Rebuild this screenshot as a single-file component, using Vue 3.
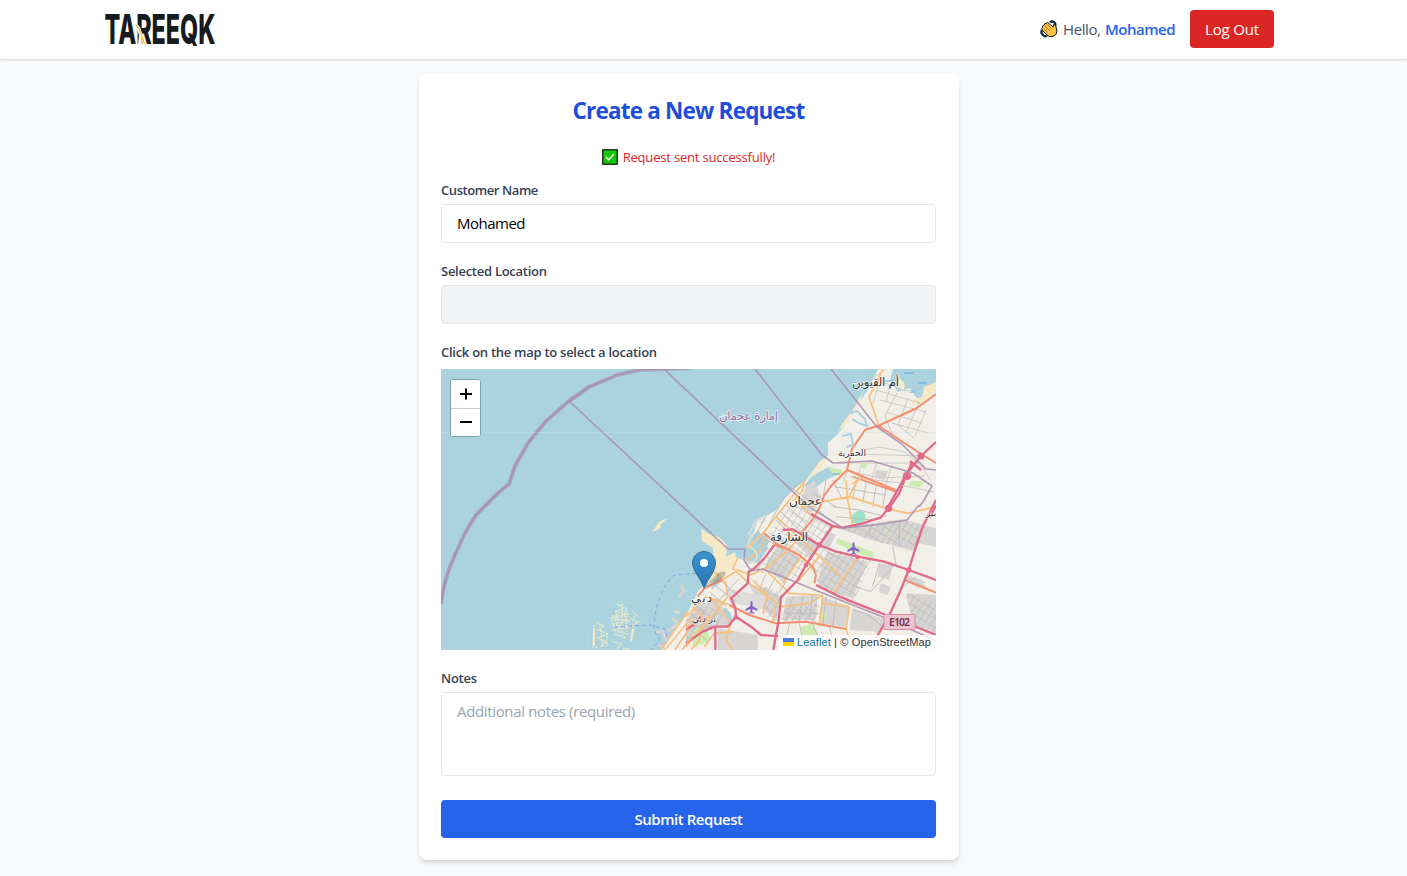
<script setup>
import { ref } from 'vue'

const customer = ref('Mohamed')
const location = ref('')
const notes = ref('')

// Northern road network, in map canvas units
const northMinor = [
  'M848 470L842 484M861 465L856 484M877 462L870 484M892 465L886 484M905 471L900 484M836 463L920 463L930 480M853 454L925 456M900 485L934 492M850 477L900 483M862 450L880 447L905 452L925 470M846 470L880 478L925 476',
  'M872 378L906 391L922 388M876 390L920 403M880 400L926 412M886 412L922 423M892 423L928 433M897 393L885 416L894 439M908 398L898 425L914 438M919 402L906 433M926 410L915 436M891 383L886 402M881 372L873 404M868 381L885 370'
]
const northOrange = 'M883 369L869 397L878 423L879 429M858 480L847 500M864 476L852 484'
const northCoral = 'M936 394L917 408L880 425L865 430L852 449L847 470L830 487M879 426L921 454L936 463M847 470L898 491'
const northPink = 'M936 442L921 456L908 472L901 484L888 507M908 472L912 462M936 505L930 518M910 461L921 470'

// City road network, on a canvas three times finer than the map
const cityPink = 'M655 0L640 40L610 82L585 112L530 130L470 143L440 138L375 102M440 138L400 195L360 255L335 300L285 352L278 420L262 510M290 150L320 148L350 165L400 195L450 215L515 230L595 245L668 270L750 300M750 60L710 140L690 200L668 270L640 340L610 405L585 450L570 475M265 195L235 235L205 265L188 275L185 310L135 355L148 385L150 410L195 440L225 465L300 470M0 490L50 455L85 440L125 440L150 410M390 315L460 350L535 380L600 405L750 465M88 440V510M0 450L30 430L45 410'
const cityCoral = 'M450 0L415 45L400 85L375 125L345 160M265 195L300 205L340 225L380 260L390 285L385 310M130 375L190 405L270 430L360 425L480 447M35 350L55 325L110 300M655 300L750 338M500 -10L630 35M235 160L270 190L300 205'
const cityOrange = 'M110 300L155 270L195 285L235 265L310 340L400 345M85 275L120 310L125 350L60 430L0 500M155 235L140 265L190 310L260 360L290 380L370 370L410 345M185 205L235 155L270 110L310 60L355 5L350 30L325 60L360 80L410 65L490 50L600 85L665 100L750 80M270 110L330 165L400 230L465 290M325 60L375 105M480 0L485 60L500 135M515 230L440 345M410 345L400 440M345 230L290 310M490 380L480 447L500 500M410 370L490 380M400 230L330 310M350 165L300 215L235 270M240 165L225 210L185 240M200 300L245 345L230 400M270 375L260 430M0 410L60 350L105 365L130 375M75 355L135 430L120 480L140 510M20 380L50 410L40 480L15 510M0 440L75 410M55 500L85 460L140 455'
const cityStreets = 'M200 180L240 110L225 130M215 195L290 60L345 5M300 75L370 140M285 95L350 160M270 120L330 180M310 20L370 60M340 70L400 130M365 60L430 120M380 40L450 80M420 0L410 60M440 0L470 60M445 20L600 45M440 80L520 90L600 110M450 110L560 120M510 0L500 60M540 10L530 70M570 20L560 80M600 25L590 80M640 120L640 190M560 130L545 170M620 200L630 250L555 335L510 320M580 250L560 320M690 290L640 330M655 300L720 320M90 290L160 350M80 310L150 365M70 335L120 380M130 330L90 370M160 295L110 350M10 400L80 450M25 370L95 430M20 440L60 480M60 390L20 430M90 400L50 450M320 350L300 420M350 350L340 420M380 345L370 420M300 400L400 400M420 350L410 440M450 360L440 440M500 390L540 400L590 440L570 460M240 280L220 330M270 290L245 335M300 305L270 350M310 430L300 480M340 430L350 480M380 430L400 480M430 440L440 480'
const blocks = [
  'M240 165L330 60L440 140L400 195L335 300L190 270L235 235Z',
  'M400 195L560 240L500 370L395 322L390 285L360 255Z',
  'M190 290L285 340L275 430L225 400L245 345Z',
  'M470 143L650 118L720 140L690 205L560 185Z',
  'M300 385L400 370L390 430L280 425Z',
  'M30 380L130 385L90 440L0 490V430Z',
  'M660 340L750 365V460L690 440Z'
]
const plane = 'M0-6Q1-6 1-4V-1L6 2V4L1 2V5L3 6V7L0 6L-3 7V6L-1 5V2L-6 4V2L-1-1V-4Q-1-6 0-6Z'
const coast = 'M878 369L869 388L859 403L854 412L846 423L839 433L828 443L828 455L819 468L811 477L799 485L789 493L776 510L768 515L758 518L753 535L746 548L744 560L728 555L726 572L706 582L699 590L693 602L686 615L661 650H936V369Z'
const border = 'M441 604Q444 579 454 557L465 533L476 515L486 505L498 493L509 484L515 466L528 443L546 421L569 401L589 387L617 375L639 370L690 368'
</script>

<template>
  <div class="page">
    <header class="bar">
      <svg class="logo" width="112" height="36" viewBox="0 0 112 36" role="img">
        <text x="0.5" y="33" textLength="111" lengthAdjust="spacingAndGlyphs">TAREEQK</text>
        <path d="M30 10L36 16L42 33.5H34L35 24Z" fill="#fff" />
        <path d="M31 12L36 18L41 33H37.5L36 23Z" fill="#f4b51e" />
        <path d="M34 17L39.5 33" stroke="#fff" stroke-width=".8" />
      </svg>
      <div class="account">
        <svg class="wave" width="18" height="18" viewBox="0 0 18 18">
          <path d="M10 2.5Q12 .5 14.5 2.5Q16 4 15 6M2 10Q.5 13 3 15Q5 17 7 16" fill="none" stroke="#15323a" stroke-width="2.4" />
          <path d="M2.5 7.5Q2 5.5 4 5.5Q4 3 6 3.5Q7 1.5 9 3.5L13 7L13.5 4.5Q16 4 16 7L17 11Q17 15 13 16.5Q9 17.5 7 15L2.5 10.5Q1 8.5 2.5 7.5Z" fill="#fdc040" stroke="#171717" stroke-width="1" />
          <path d="M5 6L9.5 10.5M7.5 4.5L11.5 8.5M4 9L7.5 12.5" stroke="#9b6a1d" stroke-width=".7" />
        </svg>
        <span class="hello">Hello,</span>
        <span class="user">Mohamed</span>
        <button class="logout">Log Out</button>
      </div>
    </header>

    <form class="card" @submit.prevent>
      <h1>Create a New Request</h1>
      <p class="message">
        <svg width="16" height="16" viewBox="0 0 16 16">
          <rect x=".75" y=".75" width="14.5" height="14.5" fill="#16c60c" stroke="#111" stroke-width="1.2" />
          <path d="M4 8L6.7 10.7L12 5" fill="none" stroke="#fff" stroke-width="1.3" />
        </svg>
        <span>Request sent successfully!</span>
      </p>

      <label class="l-name"><span>Customer Name</span></label>
      <input v-model="customer" type="text" />
      <label class="l-loc"><span>Selected Location</span></label>
      <input v-model="location" class="locked" type="text" readonly />
      <label class="l-map"><span>Click on the map to select a location</span></label>

      <div class="map">
        <svg class="tiles" width="495" height="281" viewBox="441 369 495 281">
          <defs>
            <clipPath id="land"><path :d="coast" /></clipPath>
            <pattern id="streets" width="17" height="22" patternUnits="userSpaceOnUse" patternTransform="rotate(32)">
              <path d="M0 1H17M1 0V22" stroke="#b9b8b8" stroke-width="2" />
            </pattern>
            <linearGradient id="pin" x2="0" y2="1">
              <stop stop-color="#3b91cf" /><stop offset="1" stop-color="#2877b5" />
            </linearGradient>
          </defs>
          <rect x="441" y="369" width="495" height="281" fill="#aad3df" />
          <path :d="coast" fill="#f2efe9" />
          <g fill="#aad3df">
            <path d="M893 369H936V391L917 399L910 388L898 392L890 380ZM811 477L828 467L839 474L826 480L815 488L819 500L810 496L805 485ZM753 536L758 530L762 536L768 548L759 562L747 564L743 553ZM765 533L769 541L766 549L761 540Z" />
            <path d="M724 608L730 612L734 622L727 620L721 613ZM722 650L733 638L742 640L748 650ZM716 574L721 582L711 590Z" />
          </g>
          <g fill="#f5e9c6">
            <path d="M701 529L711 535L719 537L727 545L726 557L735 552L737 560L728 573L709 583L704 579L714 563L713 548L702 541ZM652 532L660 521L668 518L661 524L660 529ZM897 375L905 384L904 391L897 387ZM911 400L922 397L924 387L936 382V390L922 405L912 404Z" />
            <path d="M864 390L854 408L842 424L838 432L849 420L860 402ZM820 461L828 456L820 470L804 483Z" />
            <path d="M828 467L843 470L841 475L835 476Z" fill="#cdebb0" />
          </g>

          <g transform="translate(686 480) scale(.33333)">
            <g fill="#d6d5d3">
              <path d="M245 240L290 180L340 235L295 310L238 262ZM330 190L360 155L400 195L375 235ZM405 260L425 215L545 245L500 355L395 322ZM450 145L650 118L750 145V200L700 190L690 215L540 175L500 160ZM420 150L450 165L430 205L405 195ZM300 350L395 345L390 420L290 420ZM410 350L490 380L480 440L405 430ZM500 385L600 420L580 455L490 450ZM660 340L750 345V465L680 440ZM665 285L720 305L700 325L655 300ZM185 310L245 325L285 350L270 425L230 385ZM95 445L215 465V510H95ZM340 70L360 20L385 0L405 55L375 100Z" />
              <path d="M580 250L620 255L610 300L575 290ZM585 310L615 320L605 345L578 335ZM30 380L100 355L135 440L80 445L0 490V420Z" />
              <path d="M120 325L240 350L235 390L130 365Z" fill="#dedddb" />
            </g>
            <g fill="#cdebb0"><path d="M455 175L560 215L565 235L510 220L450 190ZM345 440L380 430L400 470H345ZM20 450L60 440L75 480L20 505ZM405 400H422V418H405ZM430 255L445 260L435 272Z" /><circle cx="603" cy="159" r="5" /><circle cx="662" cy="175" r="5" /></g>
            <path d="M498 105L515 92L535 95L540 120L520 132L500 128Z" fill="#9ce3c9" />
            <g fill="none" stroke-linejoin="round">
              <path v-for="d in blocks" :key="d" :d="d" fill="url(#streets)" />
              <path :d="cityStreets" stroke="#bab8b8" stroke-width="2.6" />
              <path :d="cityOrange" stroke="#f9c07c" stroke-width="5" />
              <path :d="cityCoral" stroke="#f5906f" stroke-width="6" />
              <path :d="cityPink" stroke="#e26a89" stroke-width="7" />
            </g>
            <g fill="#e26a89"><circle cx="400" cy="195" r="8" /><circle cx="360" cy="255" r="7" /><circle cx="515" cy="231" r="7" /><circle cx="668" cy="270" r="8" /><circle cx="608" cy="85" r="11" /><circle cx="150" cy="412" r="7" /></g>
            <path d="M200 160Q175 200 200 205Q220 225 210 240Q190 260 170 230" fill="none" stroke="#e8ddc5" stroke-width="5" />
            <path d="M188 165L210 120L240 112" fill="none" stroke="#ded9d4" stroke-width="6" />
          </g>

          <g clip-path="url(#land)" fill="none" stroke-linejoin="round">
            <path v-for="d in northMinor" :key="d" :d="d" stroke="#c3c1bf" stroke-width=".8" />
            <path :d="northOrange" stroke="#f9c07c" stroke-width="1.7" />
            <path :d="northCoral" stroke="#f5906f" stroke-width="2" />
            <path :d="northPink" stroke="#e26a89" stroke-width="2.3" />
          </g>
          <g fill="#e26a89"><circle cx="921" cy="456" r="3.5" /><circle cx="907" cy="476" r="4" /></g>
          <g fill="#cdebb0"><path d="M912 481L925 481L919 488L908 485ZM862 462L868 464L865 469L860 467Z" /></g>
          <path d="M876 470L888 471L885 480L875 478Z" fill="#d3d2cf" />

          <g fill="none" stroke="#a88cae" stroke-linejoin="round">
            <path :d="border" stroke-width="4" opacity=".65" />
            <path :d="border" stroke-width="1.2" />
            <path d="M569 401L728 549H745L744 560L751 571L763 569L830 596L888 619L936 641M664 369L808 506L843 528L875 525L907 520L919 505M755 369L822 455L833 463L872 461L913 473L932 486L923 502L919 507M831 369L877 427L902 444L926 469L936 470" stroke-width="1.6" opacity=".85" />
          </g>
          <g fill="none" stroke="#e6e6cc" stroke-width="1.5" stroke-dasharray="2 1">
            <path d="M617 604L624 608L615 612L629 614L610 618L630 621L611 624L629 627L612 630L628 634M622 604V635M616 610L619 633M626 607L627 632M612 616L626 616M611 621L628 619M613 626H629M615 634L626 638" />
            <path d="M632 611L637 615L631 619L639 622L632 625L634 630L631 641M596 622L604 626L598 630L608 634L597 638L606 642L600 647M594 625L593 647L597 648M600 624L603 648M607 633V646M612 641L621 644L617 650M623 649H630" />
          </g>
          <path d="M594 628V646M633 629L631 640" stroke="#f5e9c6" stroke-width="2" />
          <path d="M588 650Q587 622 602 609Q620 596 638 606Q648 616 640 638M673 595Q670 603 682 610" fill="none" stroke="#b5d8d7" />
          <path d="M614 627L650 625L665 629L668 641M650 651L660 640L654 630Q655 593 674 575L701 573M697 574L707 586" fill="none" stroke="#87a5e3" stroke-width="1" stroke-dasharray="4 3" />
          <path d="M681 585L684 591L679 597M674 611L680 613M656 632L663 632L665 641M672 618L678 624L668 631M658 644L665 649" fill="none" stroke="#d9d4d1" stroke-width="3" />
          <path d="M675 650L689 629M682 650L693 636" stroke="#f3b572" stroke-width="1.5" />
          <path d="M661 650L688 611M665 650L692 617" stroke="#f9c07c" stroke-width="1.5" />
          <path d="M850 413L857 411L865 419L867 426L859 423L852 419M842 436L851 434L853 445L846 447" fill="none" stroke="#aad3df" stroke-width="2" />
          <path d="M441 432.5H936" stroke="#c8e4e9" stroke-width=".6" opacity=".5" />
          <g stroke="#59aee8" stroke-width="1"><path d="M884 381H893M904 373H914M918 383H927M910 392H915M833 474H840" /></g>

          <g class="place">
            <text x="852" y="386" textLength="47">أم القيوين</text>
            <text x="838" y="456" textLength="28" class="small">الحمرية</text>
            <text x="789" y="505" textLength="33">عجمان</text>
            <text x="770" y="541" textLength="38">الشارقة</text>
            <text x="691" y="602" textLength="21">دبي</text>
            <text x="692" y="622" textLength="24" class="small">بر دبي</text>
            <text x="926" y="516" class="small">بير</text>
            <text x="719" y="420" textLength="59" class="region">إمارة عجمان</text>
          </g>
          <g fill="#8461c4">
            <path :d="plane" transform="translate(751.5 607)" /><path :d="plane" transform="translate(853.5 548)" />
          </g>
          <rect x="884" y="614.5" width="31" height="15" rx="1" fill="#edc4d1" stroke="#d58fa2" />
          <text x="889" y="626" class="route" textLength="21">E102</text>

          <path d="M704 587L718 573Q728 569 725 576Q720 583 704 587Z" fill="#333" opacity=".25" />
          <path d="M704 588Q702 582 696 573Q692.500 567 692.500 563A11.500 11.500 0 0 1 715.500 563Q715.500 568 712 574Q706 583 704 588Z" fill="url(#pin)" stroke="#2e6c97" />
          <circle cx="704" cy="563" r="4" fill="#fff" />
        </svg>
        <div class="zoom">
          <button type="button"><svg width="12" height="12"><path d="M6 0.500V11.500M0 6H12" stroke="#000" stroke-width="2" /></svg></button>
          <button type="button"><svg width="12" height="12"><path d="M0 6H12" stroke="#000" stroke-width="2" /></svg></button>
        </div>
        <div class="credit">
          <svg width="11" height="8"><rect width="11" height="4" fill="#4c7be1" /><rect y="4" width="11" height="4" fill="#ffd500" /></svg>
          <span class="credit-text"><a>Leaflet</a> | © OpenStreetMap</span>
        </div>
      </div>

      <label class="l-notes"><span>Notes</span></label>
      <textarea v-model="notes" placeholder="Additional notes (required)"></textarea>
      <button class="submit"><span>Submit Request</span></button>
    </form>
  </div>
</template>

<style>
body { background: #f9fafb; }
</style>

<style scoped>
.page { font-family: "Segoe UI", "Open Sans", "Noto Sans", sans-serif; height: 876px; overflow: hidden; background: #f9fafb; }
.page * { box-sizing: border-box; }
button, input, textarea { font-family: inherit; }
.bar { height: 59px; background: #fff; box-shadow: 0 1px 2px rgba(0, 0, 0, .15); padding: 0 133px 1px 104px; display: flex; justify-content: space-between; align-items: center; }
.logo { display: block; overflow: visible; }
.logo text { font: 800 41px Inter, sans-serif; fill: #171b20; }
.account { display: flex; align-items: center; font-size: 15px; color: #4b5563; }
.wave { margin-right: 5px; }
.hello { width: 42px; letter-spacing: -.42px; white-space: nowrap; }
.user { width: 70px; margin-right: 15px; color: #2563eb; font-weight: 600; letter-spacing: -.5px; }
.logout { width: 84px; height: 38px; padding: 0; border: 0; border-radius: 4px; background: #dc2626; color: #fff; font-size: 15px; letter-spacing: -.15px; }
.card { width: 540px; height: 787px; margin: 14px 0 0 419px; padding: 22px 23px 22px 22px; display: flex; flex-direction: column; background: #fff; border-radius: 8px; box-shadow: 0 4px 6px -1px rgba(0, 0, 0, .12), 0 2px 4px -2px rgba(0, 0, 0, .12); }
h1 { margin: 0; height: 32px; line-height: 32px; text-align: center; color: #1d4ed8; font-size: 22.5px; font-weight: 700; letter-spacing: -.8px; white-space: nowrap; }
.message { height: 20px; margin: 20px 0 13px; display: flex; align-items: center; justify-content: center; gap: 5px; color: #dc2626; font-size: 13px; font-weight: 500; letter-spacing: -.18px; }
label { display: block; height: 20px; margin: 0 0 4px; line-height: 20px; color: #374151; font-size: 13px; font-weight: 600; letter-spacing: -.27px; }
.l-name { letter-spacing: -.42px; }
.l-loc, .l-map, .l-notes { margin-top: 18px; }
.l-map { margin-bottom: 7px; }
input { width: 100%; height: 39px; flex: none; padding: 0 15px 2px; border: 1px solid #e5e7eb; border-radius: 4px; background: #fff; color: #000; font-size: 15px; letter-spacing: -.5px; outline: 0; }
.locked { background: #f3f4f6; }
.map { position: relative; height: 281px; flex: none; overflow: hidden; }
.tiles { display: block; }
.place text { font-family: "DejaVu Sans", sans-serif; font-size: 12px; fill: #333; stroke: #fff; stroke-opacity: .7; stroke-width: 1.6px; paint-order: stroke; direction: ltr; }
.place .small { font-size: 9px; }
.place .region { fill: #8f74a5; }
.route { font: 600 10.5px "Noto Sans", sans-serif; fill: #76304c; }
.zoom { position: absolute; left: 9px; top: 10px; width: 31px; height: 58px; border: 1px solid #819fa8; border-radius: 3px; background: #fff; overflow: hidden; display: flex; flex-direction: column; }
.zoom button { flex: 1; display: flex; align-items: center; justify-content: center; padding: 0; border: 0; background: #fff; }
.zoom button + button { border-top: 1px solid #ccc; }
.credit { position: absolute; right: 0; bottom: 0; width: 158px; height: 15px; padding-left: 5px; display: flex; align-items: center; gap: 3px; background: rgba(255, 255, 255, .8); font: 11px/15px "Liberation Sans", Arial, sans-serif; letter-spacing: .13px; color: #333; white-space: nowrap; }
.credit svg { position: relative; top: -1px; }
.credit a { color: #0078a8; }
textarea { display: block; width: 100%; height: 84px; flex: none; padding: 7px 15px; border: 1px solid #e5e7eb; border-radius: 4px; resize: none; font-size: 15px; line-height: 22px; letter-spacing: -.35px; outline: 0; }
textarea::placeholder { color: #9ca3af; opacity: 1; }
.submit { height: 38px; flex: none; margin-top: 24px; padding: 0; border: 0; border-radius: 4px; background: #2563eb; color: #fff; font-size: 15px; font-weight: 600; letter-spacing: -.45px; }
</style>
